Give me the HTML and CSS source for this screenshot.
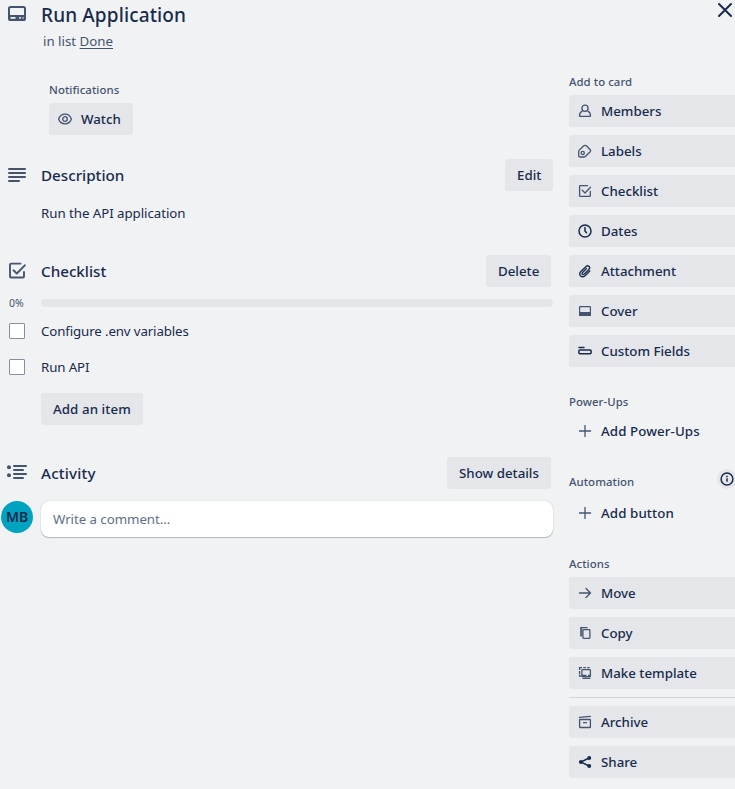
FILE: index.html
```html
<!DOCTYPE html>
<html lang="en">
<head>
<meta charset="utf-8">
<title>Run Application</title>
<link rel="stylesheet" href="styles.css">
</head>
<body>
<div class="card">
  <main class="main">
    <header class="card-header">
      <svg class="icon title-icon" width="18" height="16" viewBox="0 0 18 16"><rect x="1" y="1" width="16" height="13" rx="1.600" fill="none" stroke="currentColor" stroke-width="2"/><path fill="currentColor" d="M1 9h16v4.500q0 1.500-1.500 1.500h-13Q1 15 1 13.500z"/><path d="M2.500 11.900h5M11.200 11.900h1.600M14.500 11.900h1" stroke="#f1f2f4" stroke-width="1.700"/></svg>
      <h1>Run Application</h1>
    </header>
    <p class="list-line">in list <a>Done</a></p>

    <section class="notifications">
      <h3>Notifications</h3>
      <button class="btn watch"><svg class="icon" width="16" height="16" viewBox="0 0 16 16" fill="none" stroke="currentColor" stroke-width="1.300"><path d="M1.600 8C2.800 4.800 5 3.200 8 3.200S13.200 4.800 14.400 8C13.200 11.200 11 12.800 8 12.800S2.800 11.200 1.600 8z"/><circle cx="8" cy="8" r="2.300"/></svg><span>Watch</span></button>
    </section>

    <section class="description">
      <div class="section-head">
        <svg class="icon" width="18" height="16" viewBox="0 0 18 16" stroke="currentColor" stroke-width="2" stroke-linecap="round"><path d="M1 2h16M1 6h16M1 10h16M1 14h10"/></svg>
        <h2>Description</h2>
        <button class="btn edit">Edit</button>
      </div>
      <p class="description-text">Run the API application</p>
    </section>

    <section class="checklist">
      <div class="section-head">
        <svg class="icon" width="18" height="18" viewBox="0 0 18 18" fill="none" stroke="currentColor" stroke-width="1.900" stroke-linecap="round" stroke-linejoin="round"><path d="M12.500 1.600H3Q2 1.600 2 2.600v11.900q0 1 1 1h12q1 0 1-1v-4.500"/><path d="M5.500 8.300L8.800 11.500l8-8.200"/></svg>
        <h2>Checklist</h2>
        <button class="btn delete">Delete</button>
      </div>
      <div class="progress"><span>0%</span><div class="track"></div></div>
      <div class="item"><i class="box"></i><span class="item-text">Configure .env variables</span></div>
      <div class="item"><i class="box"></i><span class="item-text">Run API</span></div>
      <button class="btn add-item">Add an item</button>
    </section>

    <section class="activity">
      <div class="section-head">
        <svg class="icon" width="20" height="18" viewBox="0 0 20 18" stroke="currentColor" stroke-width="2" stroke-linecap="round"><path d="M7 2h12M7 6h9M7 10h12M7 14h9"/><circle cx="2" cy="3.200" r="2" fill="currentColor" stroke="none"/><circle cx="2" cy="11.200" r="2" fill="currentColor" stroke="none"/></svg>
        <h2 class="activity-name">Activity</h2>
        <button class="btn details">Show details</button>
      </div>
      <div class="comment-row">
        <div class="avatar">MB</div>
        <div class="comment">Write a comment...</div>
      </div>
    </section>
  </main>

  <aside class="sidebar">
    <div class="close"><svg width="16" height="16" viewBox="0 0 16 16" stroke="currentColor" stroke-width="2" stroke-linecap="round"><path d="M2 2l12 12M14 2L2 14"/></svg></div>

    <h3>Add to card</h3>
    <nav class="actions">
      <button class="btn side"><svg class="icon" width="16" height="16" viewBox="0 0 16 16" fill="none" stroke="currentColor" stroke-width="1.300"><circle cx="8" cy="5.200" r="3.100"/><path d="M5.400 8.200C3.300 9 2.500 11 2.500 12.800q0 .6.600.6h9.800q.6 0 .6-.6c0-1.800-.8-3.800-2.900-4.600"/></svg><span>Members</span></button>
      <button class="btn side"><svg class="icon" width="16" height="16" viewBox="0 0 16 16" fill="none" stroke="currentColor" stroke-width="1.300" stroke-linejoin="round"><path d="M1.700 8.800Q1.700 7.700 2.500 6.900L6.500 3Q7.300 2.200 8.200 2.300Q9 2.300 9.700 3L13.200 6.700Q14.200 7.800 13.200 8.800L8.600 13.200Q7.800 14 6.700 14H3.200Q1.700 14 1.700 12.400z"/><circle cx="5.700" cy="10" r="1.600"/></svg><span>Labels</span></button>
      <button class="btn side"><svg class="icon" width="16" height="16" viewBox="0 0 16 16" fill="none" stroke="currentColor" stroke-width="1.300" stroke-linecap="round" stroke-linejoin="round"><path d="M10.500 2.700H3.200q-.6 0-.6.600v9.500q0 .6.600.6h9.500q.6 0 .6-.6V8.500"/><path d="M5.300 7.300L8 10l5.500-5.700"/></svg><span>Checklist</span></button>
      <button class="btn side"><svg class="icon dark" width="16" height="16" viewBox="0 0 16 16" fill="none" stroke="currentColor" stroke-width="1.500" stroke-linecap="round"><circle cx="8" cy="8" r="6"/><path d="M8 4.500V8l1.500 1.800"/></svg><span>Dates</span></button>
      <button class="btn side"><svg class="icon dark" width="16" height="16" viewBox="0 0 16 16" fill="none" stroke="currentColor" stroke-width="1.350" stroke-linecap="round"><path d="M12.800 8L8.300 12.400C4.700 15.800.7 11.700 4.100 8.300L8.800 3.700C11.300 1.400 14.100 4.300 11.700 6.700L7.300 11C5.800 12.400 4.200 10.800 5.600 9.400L9.500 5.600"/></svg><span>Attachment</span></button>
      <button class="btn side"><svg class="icon" width="16" height="16" viewBox="0 0 16 16"><rect x="2.600" y="3.600" width="10.800" height="8.800" rx=".7" fill="none" stroke="currentColor" stroke-width="1.200"/><path fill="currentColor" d="M2 9h12v3q0 1-1 1H3q-1 0-1-1z"/></svg><span>Cover</span></button>
      <button class="btn side"><svg class="icon dark" width="16" height="16" viewBox="0 0 16 16" fill="none" stroke="currentColor" stroke-width="1.500" stroke-linecap="round"><path d="M2 4.500h5"/><rect x="1.900" y="6.900" width="12.200" height="3.900" rx="1"/></svg><span>Custom Fields</span></button>
    </nav>

    <h3 class="group-title">Power-Ups</h3>
    <button class="btn side plain"><svg class="icon" width="16" height="16" viewBox="0 0 16 16" stroke="currentColor" stroke-width="1.300"><path d="M8 2v12M2 8h12"/></svg><span>Add Power-Ups</span></button>

    <div class="automation-title">
      <h3>Automation</h3>
      <span class="info"><svg width="16" height="16" viewBox="0 0 16 16" fill="none" stroke="currentColor" stroke-width="1.500"><circle cx="8" cy="8" r="5.900"/><path d="M8 7.200v3.600M8 4.800v1.400"/></svg></span>
    </div>
    <button class="btn side plain"><svg class="icon" width="16" height="16" viewBox="0 0 16 16" stroke="currentColor" stroke-width="1.300"><path d="M8 2v12M2 8h12"/></svg><span>Add button</span></button>

    <h3 class="group-title">Actions</h3>
    <nav class="actions">
      <button class="btn side"><svg class="icon" width="16" height="16" viewBox="0 0 16 16" fill="none" stroke="currentColor" stroke-width="1.300" stroke-linecap="round" stroke-linejoin="round"><path d="M2.500 8h11M9 3.500L13.500 8 9 12.500"/></svg><span>Move</span></button>
      <button class="btn side"><svg class="icon" width="16" height="16" viewBox="0 0 16 16" fill="none" stroke="currentColor" stroke-width="1.300"><path d="M4 11.500V2.700h6.500"/><path d="M3.300 2h2v9.300h-2z" fill="currentColor" stroke="none" opacity=".6"/><rect x="5.900" y="4.600" width="7" height="8.800" rx=".8"/></svg><span>Copy</span></button>
      <button class="btn side"><svg class="icon" width="16" height="16" viewBox="0 0 16 16" fill="none" stroke="currentColor" stroke-width="1.300"><path d="M2.600 5V2.700H5M6.300 2.700h2.600M10.200 2.700h2.500M2.600 6v3M2.600 9.500v1.600h2"/><rect x="4.900" y="4.700" width="8.500" height="7" rx=".6"/><path d="M5 10.600h4.500M11 10.600h2" stroke-width="1.600"/><path d="M5.500 13.300h7.900"/></svg><span>Make template</span></button>
    </nav>
    <hr>
    <nav class="actions">
      <button class="btn side"><svg class="icon" width="16" height="16" viewBox="0 0 16 16" fill="none" stroke="currentColor" stroke-width="1.300" stroke-linecap="round"><path d="M2.500 3.400L13.400 2.300"/><rect x="2.600" y="5.500" width="10.800" height="8" rx=".5"/><path d="M6.500 8.700h3"/></svg><span>Archive</span></button>
      <button class="btn side"><svg class="icon dark" width="16" height="16" viewBox="0 0 16 16" stroke="currentColor" stroke-width="1.500"><path d="M12 4L4 8l8 4" fill="none"/><g fill="currentColor" stroke="none"><circle cx="12.200" cy="3.900" r="2"/><circle cx="3.900" cy="8" r="2"/><circle cx="12.200" cy="12.100" r="2"/></g></svg><span>Share</span></button>
    </nav>
  </aside>
</div>
</body>
</html>
```
FILE: styles.css
```css
* { box-sizing: border-box; }

body {
  margin: 0;
  background: #f1f2f4;
  color: #172b4d;
  font: 400 13.3px/20px "Noto Sans", "Open Sans", sans-serif;
  overflow: hidden;
}

h1, h2, h3, p { margin: 0; }
svg { display: block; flex: none; }
.icon { color: #44546f; }
.icon.dark { color: #172b4d; }

.card {
  display: grid;
  grid-template-columns: 553px 166px;
  column-gap: 16px;
  height: 789px;
}

h1 { font-size: 19px; line-height: 24px; font-weight: 500; letter-spacing: .13px; }
h2 { flex: 1; font-size: 15.2px; line-height: 20px; font-weight: 500; }
h3 { font-size: 11.4px; line-height: 16px; font-weight: 500; color: #44546f; letter-spacing: .05px; }

.card-header { display: flex; gap: 15px; padding: 3px 0 0 8px; }
.title-icon { margin-top: 3px; }
.list-line { padding: 4px 0 0 43px; color: #44546f; }
.list-line a { color: #44546f; text-decoration: underline; text-underline-offset: 2px; }

.btn {
  display: flex;
  align-items: center;
  height: 32px;
  padding: 0 12px;
  border: 0;
  border-radius: 3px;
  background: #e4e6ea;
  color: #172b4d;
  font: inherit;
  font-weight: 500;
  white-space: nowrap;
}

.notifications { padding: 31px 0 0 49px; }
.watch { width: 84px; margin-top: 5px; padding: 0 8px; gap: 8px; }

.section-head { display: flex; align-items: center; gap: 15px; height: 32px; padding-left: 8px; }
.description { padding-top: 24px; }
.edit { width: 48px; }
.description-text { padding: 12px 0 0 41px; letter-spacing: -.05px; }

.checklist { padding-top: 32px; }
.delete { width: 65px; margin-right: 2px; }
.progress { display: flex; align-items: center; height: 8px; margin-top: 12px; }
.progress span { width: 41px; padding-left: 9px; font-size: 10.5px; color: #44546f; }
.track { flex: 1; height: 8px; border-radius: 4px; background: #e4e6ea; }
.item { display: flex; align-items: center; gap: 16px; height: 36px; padding-left: 9px; }
.item-text { letter-spacing: -.13px; }
.progress + .item { margin-top: 6px; }
.box { width: 16px; height: 16px; border: 1px solid #8590a2; border-radius: 1px; background: #fff; }
.add-item { width: 102px; margin: 8px 0 0 41px; letter-spacing: .08px; }

.activity { padding-top: 32px; }
.activity .section-head { padding-left: 7px; gap: 14px; }
.activity-name { letter-spacing: .18px; }
.details { width: 104px; margin-right: 2px; }
.comment-row { display: flex; gap: 8px; padding: 12px 0 0 1px; }
.avatar {
  width: 32px;
  height: 32px;
  border-radius: 50%;
  background: #00a3bf;
  font-size: 14px;
  font-weight: 600;
  line-height: 32px;
  text-align: center;
}
.comment {
  flex: 1;
  height: 36px;
  padding: 8px 12px;
  border-radius: 8px;
  background: #fff;
  color: #626f86;
  letter-spacing: -.06px;
  box-shadow: 0 1px 1px #091e4240, 0 0 1px #091e424f;
}

.close { display: flex; justify-content: flex-end; height: 74px; padding: 2px 2px 0 0; }
.actions { display: grid; gap: 8px; }
h3 + .actions, h3 + .btn { margin-top: 5px; }
.side { width: 100%; padding: 0 8px; gap: 8px; border-radius: 3px 0 0 3px; }
.plain { background: none; letter-spacing: .1px; }
.group-title { margin-top: 27px; }
.automation-title { display: flex; justify-content: space-between; height: 23px; margin: 27px -2px 0 0; }
.info { display: grid; place-items: center; width: 20px; height: 20px; margin-top: -5px; border-radius: 50%; background: #e4e6ea; }
hr { height: 1px; margin: 8px 0; border: 0; background: #d0d4db; }
```
